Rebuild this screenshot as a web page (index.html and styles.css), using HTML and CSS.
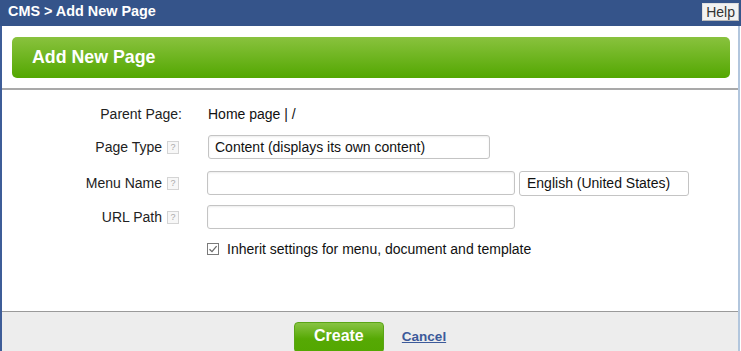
FILE: index.html
```html
<!DOCTYPE html>
<html>
<head>
<meta charset="utf-8">
<title>CMS > Add New Page</title>
<link rel="stylesheet" href="styles.css">
</head>
<body>
<div class="topbar">
  <div class="crumb">CMS &gt; Add New Page</div>
  <button class="help">Help</button>
</div>
<div class="main">
  <div class="head">
    <div class="banner">Add New Page</div>
  </div>
  <div class="form">
    <div class="row row-first">
      <div class="label">Parent Page:</div>
      <div class="field"><span class="value">Home page | /</span></div>
    </div>
    <div class="row row-g9">
      <div class="label">Page Type<span class="q">?</span></div>
      <div class="field"><input class="input w-type" type="text" value="Content (displays its own content)"></div>
    </div>
    <div class="row row-g12">
      <div class="label">Menu Name<span class="q">?</span></div>
      <div class="field"><input class="input w-wide" type="text" value=""><span class="lang">English (United States)</span></div>
    </div>
    <div class="row row-g10">
      <div class="label">URL Path<span class="q">?</span></div>
      <div class="field"><input class="input w-wide" type="text" value=""></div>
    </div>
    <div class="row row-g8">
      <div class="label"></div>
      <div class="field">
        <span class="check"><svg width="10" height="10" viewBox="0 0 10 10"><path d="M1.5 5.2 L4 7.6 L8.6 2.2" fill="none" stroke="#6a6a6a" stroke-width="1.3"/></svg></span>
        <span class="check-label">Inherit settings for menu, document and template</span>
      </div>
    </div>
  </div>
  <div class="footer">
    <button class="create">Create</button>
    <a class="cancel" href="#">Cancel</a>
  </div>
</div>
</body>
</html>
```
FILE: styles.css
```css
html, body {
  margin: 0;
  padding: 0;
  height: 351px;
  overflow: hidden;
  background: #fff;
}
body {
  font-family: "Liberation Sans", Arial, sans-serif;
  font-size: 14px;
  color: #111;
  display: flex;
  flex-direction: column;
}
.topbar {
  height: 26px;
  background: #35548a;
  display: flex;
  justify-content: space-between;
  align-items: flex-start;
  flex: none;
}
.crumb {
  color: #fff;
  font-weight: bold;
  font-size: 14.4px;
  line-height: 22px;
  padding-left: 8px;
}
.help {
  margin: 3px 2px 0 0;
  height: 18px;
  padding: 0 3px;
  font-family: "Liberation Sans", Arial, sans-serif;
  font-size: 14px;
  line-height: 16px;
  color: #333;
  background: #f2f2f2;
  border: 1px solid #b8b8b8;
  border-top-color: #e0e0e0;
  border-left-color: #e0e0e0;
  border-radius: 0;
}
.main {
  flex: 1;
  display: flex;
  flex-direction: column;
  border-left: 2px solid #3e5d98;
  border-right: 2px solid #b2c6dd;
  margin-right: 1px;
  min-height: 0;
}
.head {
  padding: 11px 8px 10px 10px;
  border-bottom: 2px solid #a9a9a9;
}
.banner {
  height: 41px;
  border-radius: 5px;
  background: linear-gradient(#89c23e, #53a701);
  color: #fff;
  font-weight: bold;
  font-size: 17.8px;
  line-height: 41px;
  padding-left: 20px;
}
.form {
  flex: 1;
  padding-top: 12px;
}
.row {
  display: flex;
  align-items: center;
  height: 24px;
}
.row-g9 { margin-top: 9px; }
.row-g12 { margin-top: 12px; }
.row-g10 { margin-top: 10px; }
.row-g8 { margin-top: 8px; }
.label {
  width: 180px;
  flex: none;
  display: flex;
  justify-content: flex-end;
  align-items: center;
  color: #222;
}
.q {
  display: inline-block;
  width: 10px;
  height: 11px;
  margin: 0 3px 0 5px;
  border: 1px solid #d4d4d4;
  background: #f7f7f7;
  color: #aaa;
  font-size: 9px;
  line-height: 11px;
  text-align: center;
}
.field {
  margin-left: 25px;
  display: flex;
  align-items: center;
}
.value { padding-left: 1px; }
.input {
  box-sizing: border-box;
  height: 24px;
  border: 1px solid #c4c4c4;
  border-radius: 3px;
  box-shadow: inset 0 1px 2px rgba(0,0,0,0.08);
  font-family: "Liberation Sans", Arial, sans-serif;
  font-size: 14px;
  color: #111;
  padding: 0 6px;
  outline: none;
}
.w-type { width: 282px; margin-left: 1px; }
.w-wide { width: 308px; }
.lang {
  box-sizing: border-box;
  height: 25px;
  width: 170px;
  margin-left: 4px;
  border: 1px solid #c4c4c4;
  border-radius: 3px;
  padding: 0 7px;
  line-height: 23px;
  font-size: 14px;
}
.check {
  box-sizing: border-box;
  width: 12px;
  height: 12px;
  border: 1px solid #7a7a7a;
  display: inline-flex;
  align-items: center;
  justify-content: center;
  background: #fff;
}
.check-label { margin-left: 8px; }
.footer {
  flex: none;
  height: 40px;
  border-top: 1px solid #9a9a9a;
  background: #ededed;
  display: flex;
  justify-content: center;
  align-items: flex-start;
  padding-top: 10px;
  box-sizing: border-box;
  overflow: hidden;
}
.create {
  width: 90px;
  height: 31px;
  border: 1px solid #5aa516;
  border-radius: 4px;
  background: linear-gradient(#88c343, #56a904 55%, #53a701);
  color: #fff;
  font-family: "Liberation Sans", Arial, sans-serif;
  font-weight: bold;
  font-size: 16px;
  padding: 0 0 4px 0;
  flex: none;
}
.cancel {
  margin-left: 18px;
  margin-top: 7px;
  color: #3c5a9a;
  font-weight: bold;
  font-size: 13.5px;
  text-decoration: underline;
}
```
